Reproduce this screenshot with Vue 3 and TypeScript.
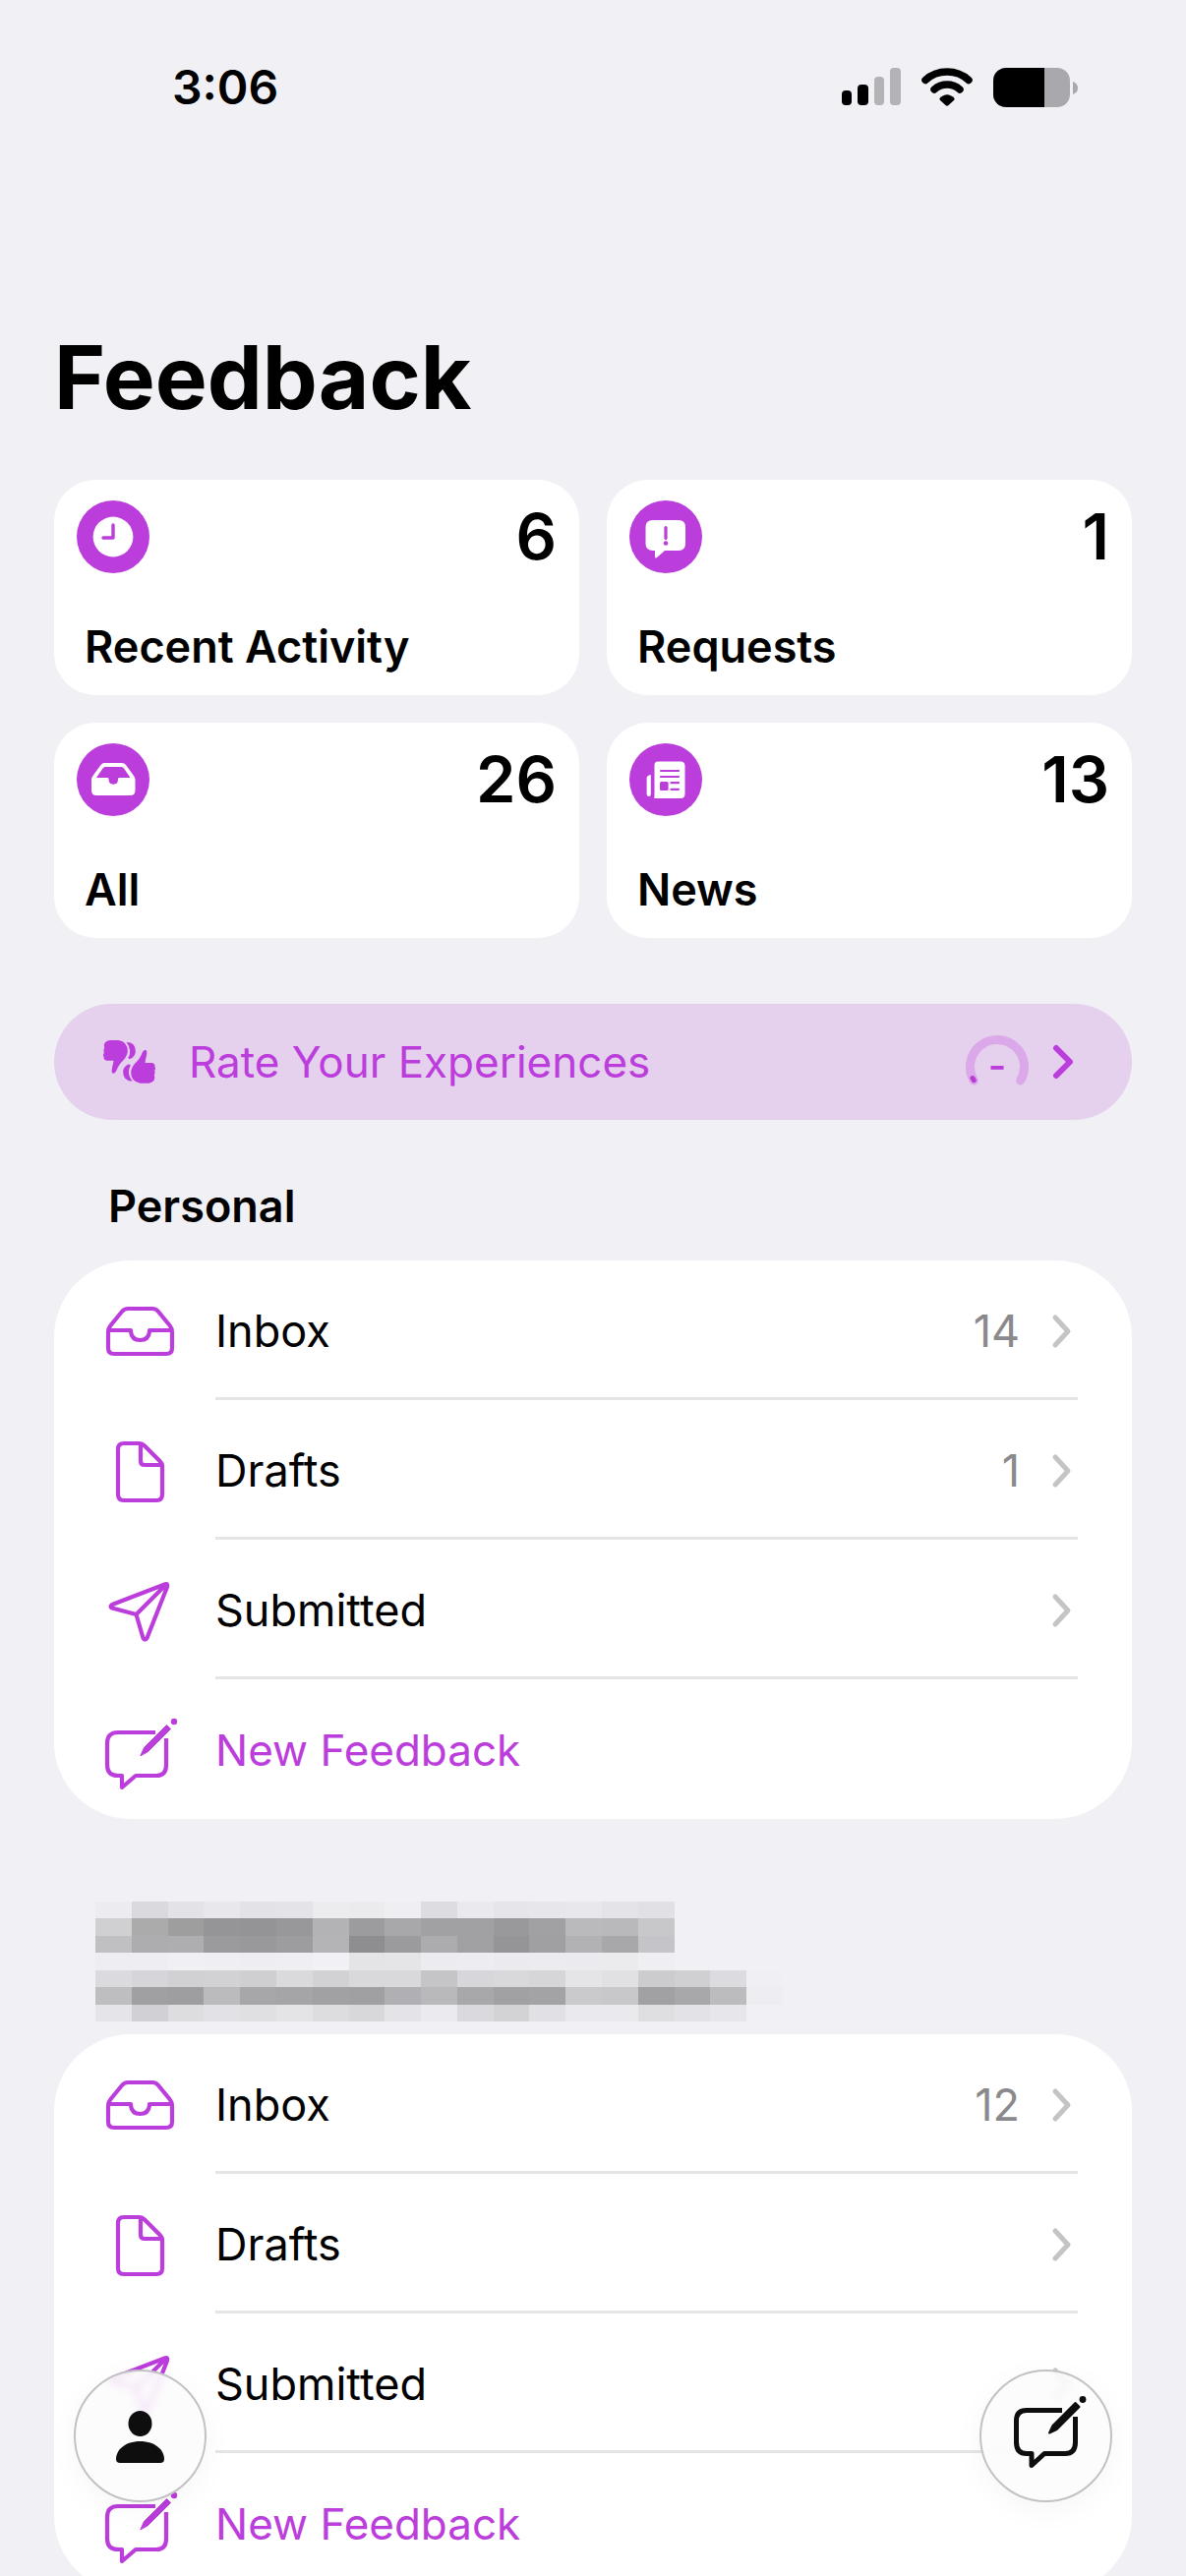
<script setup lang="ts">
type IconName = 'inbox' | 'doc' | 'send' | 'compose'

interface Tile {
  id: string
  label: string
  count: number
}

interface Row {
  label: string
  icon: IconName
  count?: number
  action?: boolean
}

interface Section {
  id: string
  title?: string
  rows: Row[]
}

const tiles: Tile[] = [
  { id: 'activity', label: 'Recent Activity', count: 6 },
  { id: 'requests', label: 'Requests', count: 1 },
  { id: 'all', label: 'All', count: 26 },
  { id: 'news', label: 'News', count: 13 },
]

const sections: Section[] = [
  {
    id: 'personal',
    title: 'Personal',
    rows: [
      { label: 'Inbox', icon: 'inbox', count: 14 },
      { label: 'Drafts', icon: 'doc', count: 1 },
      { label: 'Submitted', icon: 'send' },
      { label: 'New Feedback', icon: 'compose', action: true },
    ],
  },
  {
    id: 'team',
    rows: [
      { label: 'Inbox', icon: 'inbox', count: 12 },
      { label: 'Drafts', icon: 'doc' },
      { label: 'Submitted', icon: 'send' },
      { label: 'New Feedback', icon: 'compose', action: true },
    ],
  },
]

// Pixelated cells that hide the team name
const redacted: string[][] = [
  'ececf0 dad9de e3e3e7 e8e8ec e3e3e7 e4e4e8 ececee ebebee efeff3 dddde1 eaeaee e6e6ea e7e7eb e8e8ec e4e4e8 e1e1e5',
  'd0d0d2 ababac 9e9e9f 959597 949496 98989a b3b3b5 9c9c9e a8a8aa a1a1a3 a1a1a3 99999b a1a1a3 bababc b9b9bb c8c8ca',
  'c0c0c2 adadaf aeaeb0 9b9b9d 99999b 9d9d9f b4b4b6 8e8e90 9b9b9d acacae a1a1a3 959597 a0a0a2 b2b2b4 a8a8aa c5c4c9',
  'eeeef2 eeeef2 f0f0f4 efeff3 eeeef2 efeff3 f1f1f5 e4e4e6 e5e5e8 ecebf0 ededf1 ebebef ececf0 ebebef ebebed efeff3',
  'dbdadf d6d5da d1d1d3 d2d2d5 cfcfd1 dadadc d2d2d4 d9d9db d9d9db c5c5c7 d7d7db d9d9dc d6d6d8 e5e5e8 e1e1e4 ccccce d0d0d2 dcdbe0 f0f0f4',
  'bebec0 a0a0a2 9e9ea0 bbbbbd a7a7a9 a5a5a7 a1a1a3 a0a0a2 b0b0b4 b9b9bb a8a8aa a1a1a3 a3a3a5 cacacd c8c8ca a1a1a3 a8a8aa bcbcbe eeeef2',
  'e5e5e9 d1d1d5 dddddf e2e2e6 e0e0e3 e4e4e6 dddddf d8d8da e4e4e8 ebebef dadade d3d3d5 e1e1e5 eaeaee eaeaee dfdfe2 e3e3e7 e7e7eb f1f1f5',
].map((line) => line.split(' ').map((c) => `#${c}`))
</script>

<template>
  <div class="app">
    <header class="status">
      <span class="time">3:06</span>
      <div class="indicators">
        <svg width="60" height="40" viewBox="0 0 60 40" aria-hidden="true">
          <rect x="0" y="23" width="10" height="15" rx="4" />
          <rect x="16" y="17" width="11" height="21" rx="4" />
          <rect x="33" y="9" width="10" height="29" rx="4" fill="#b3b3b7" />
          <rect x="49" y="0" width="11" height="38" rx="4" fill="#b3b3b7" />
        </svg>
        <svg width="52" height="40" viewBox="0 0 52 40" aria-hidden="true">
          <path d="M4 12.5Q13 4 26 4T48 12.5" fill="none" stroke="#000" stroke-width="7.5" stroke-linecap="round" />
          <path d="M13 22Q18.500 17 26 17T39 22" fill="none" stroke="#000" stroke-width="7.500" stroke-linecap="round" />
          <path d="M18.500 31Q26 23.500 33.500 31Q34 32 33 33L27.500 38Q26 39.300 24.500 38L19 33Q18 32 18.500 31Z" />
        </svg>
        <svg width="86" height="40" viewBox="0 0 86 40" aria-hidden="true">
          <rect width="78" height="40" rx="13" fill="#a9a9ad" />
          <path d="M13 0H52V40H13A13 13 0 0 1 0 27V13A13 13 0 0 1 13 0Z" />
          <path d="M81 14Q86 16 86 20.500T81 27Z" fill="#a9a9ad" />
        </svg>
      </div>
    </header>

    <main class="content">
      <h1 class="title">Feedback</h1>

      <nav class="tiles" aria-label="Overview">
        <a v-for="tile in tiles" :key="tile.id" class="tile" href="#">
          <span class="tile-top">
            <svg class="tile-icon" viewBox="0 0 74 74" aria-hidden="true">
              <circle cx="37" cy="37" r="37" fill="#bb3ddb" />
              <g v-if="tile.id === 'activity'">
                <circle cx="37" cy="37" r="20.400" fill="#fff" />
                <path d="M37 25V38H27" fill="none" stroke="#bb3ddb" stroke-width="3.400" stroke-linecap="round" stroke-linejoin="round" />
              </g>
              <g v-else-if="tile.id === 'requests'">
                <path d="M24 20H50Q57 20 57 27V44Q57 51 50 51H36L28 58Q26 59.500 26 57V51H24Q16.500 51 16.500 44V27Q16.500 20 24 20Z" fill="#fff" />
                <path d="M37 27.500V38.500" stroke="#bb3ddb" stroke-width="3.200" stroke-linecap="round" />
                <circle cx="37" cy="43.500" r="2.300" fill="#bb3ddb" />
              </g>
              <g v-else-if="tile.id === 'all'">
                <path d="M28 20H46Q48.500 20 50 22L58 33Q59.500 35 59.500 37V48Q59.500 53 54.500 53H20Q15 53 15 48V37Q15 35 16.500 33L24.500 22Q26 20 28 20Z" fill="#fff" />
                <path d="M28.500 24H45.500Q47 24 48 25.500L54.500 35H43Q42 35 42 36.500Q42 41.700 37.300 41.700T32.500 36.500Q32.500 35 31.500 35H20L26.500 25.500Q27.500 24 28.500 24Z" fill="#bb3ddb" />
              </g>
              <g v-else>
                <path d="M29 18.500H52Q56.500 18.500 56.500 23V51.500Q56.500 56 52 56H25Q25.500 55 25.500 53V22Q25.500 18.500 29 18.500Z" fill="#fff" />
                <path d="M21.800 32V52Q21.800 54 19.800 54T17.600 52V35Q18 32.500 21.800 32Z" fill="#fff" />
                <path d="M32 28H50M32 34H50M42.500 40.200H50M42.500 46.800H50" stroke="#bb3ddb" stroke-width="2.200" stroke-linecap="round" />
                <rect x="31" y="39" width="8.600" height="9" rx="1.500" fill="#bb3ddb" />
              </g>
            </svg>
            <span class="tile-count">{{ tile.count }}</span>
          </span>
          <span class="tile-label">{{ tile.label }}</span>
        </a>
      </nav>

      <a class="rate" href="#">
        <svg width="57" height="50" viewBox="40 45 170 150" fill="#bb3ddb" aria-hidden="true">
          <g v-for="turn in [0, 180]" :key="turn" :transform="`rotate(${turn} 125 119.5)`">
            <path d="M50 62Q56 55 66 54H92Q120 58 120 88Q118 104 106 116Q92 128 85 148Q80 158 73 154Q70 150 73 136Q76 124 77 116H56Q46 114 47 104Q43 98 48 92Q44 84 49 78Q45 70 50 62Z" />
            <path d="M116 60Q144 60 144 88Q143 106 126 112L121 108Q128 98 127 86Q126 72 116 60Z" />
          </g>
        </svg>
        <span class="rate-label">Rate Your Experiences</span>
        <svg class="gauge" width="64" height="70" viewBox="0 -8 64 70" aria-hidden="true">
          <path d="M8.300 46A27.500 27.500 0 1 1 55.700 46" fill="none" stroke="#dba9ea" stroke-width="9" stroke-linecap="round" />
          <path d="M7 43.500L8.300 45.800" stroke="#b53dd2" stroke-width="5" stroke-linecap="round" />
          <text x="32" y="45" text-anchor="middle" font-size="40" font-weight="500" fill="#bb3ddb">-</text>
        </svg>
        <svg width="22" height="36" viewBox="0 0 22 36" aria-hidden="true">
          <path d="M4 4L18 18L4 32" fill="none" stroke="#bb3ddb" stroke-width="6" stroke-linecap="round" stroke-linejoin="round" />
        </svg>
      </a>

      <section v-for="section in sections" :key="section.id">
        <h2 v-if="section.title" class="section-title">{{ section.title }}</h2>
        <svg v-else class="redacted" viewBox="0 0 19 7" preserveAspectRatio="none" shape-rendering="crispEdges" aria-hidden="true">
          <template v-for="(line, y) in redacted" :key="y">
            <rect v-for="(fill, x) in line" :key="x" :x="x" :y="y" width="1" height="1" :fill="fill" />
          </template>
        </svg>

        <div class="list">
          <component
            :is="row.action ? 'button' : 'a'"
            v-for="row in section.rows"
            :key="row.label"
            class="row"
            :class="{ action: row.action }"
            :href="row.action ? undefined : '#'"
            :type="row.action ? 'button' : undefined"
          >
            <svg class="row-icon" viewBox="0 0 80 80" fill="none" stroke="#bb3ddb" stroke-width="4.200" stroke-linecap="round" stroke-linejoin="round" aria-hidden="true">
              <path v-if="row.icon === 'inbox'" d="M8 42V58Q8 64 14 64H67Q73 64 73 58V42Q73 38 70.500 35L59 21Q56.500 18 53 18H28Q24.500 18 22 21L10.500 35Q8 38 8 42ZM9 40H31V41.500Q32 50 40.500 50T50 41.500V40H72" />
              <path v-else-if="row.icon === 'doc'" d="M24 13H40Q42.500 13 45 15.500L60.500 31Q63 33.500 63 36V65Q63 71 57 71H24Q18 71 18 65V19Q18 13 24 13ZM41 14V31Q41 35 45 35H62" />
              <path v-else-if="row.icon === 'send'" d="M66 14.200L12 35Q9 37 12 38.500L36.500 45L43.500 69Q45.500 72.500 47.500 69L68 17Q69 13.500 66 14.200ZM36.500 45L66.500 15" />
              <g v-else>
                <path stroke-linecap="butt" d="M56 23H18Q7 23 7 34V56Q7 67 18 67H22V79L36 67H57Q67 67 67 56V29" />
                <path d="M41 46.500L44.500 38.500L67.500 15.500L71.500 19.500L48.500 42.500Z" fill="#bb3ddb" stroke-width="1" />
                <circle cx="75" cy="12" r="3.200" fill="#bb3ddb" stroke="none" />
              </g>
            </svg>
            <span class="row-body">
              <span class="row-label">{{ row.label }}</span>
              <span v-if="row.count" class="row-count">{{ row.count }}</span>
              <svg v-if="!row.action" width="22" height="36" viewBox="0 0 22 36" aria-hidden="true">
                <path d="M4 4L17 18L4 32" fill="none" stroke="#c4c4c6" stroke-width="5" stroke-linecap="round" stroke-linejoin="round" />
              </svg>
            </span>
          </component>
        </div>
      </section>
    </main>

    <div class="toolbar">
      <button class="fab" type="button" aria-label="Account">
        <svg viewBox="0 0 80 80" fill="#0e0e0f" aria-hidden="true">
          <ellipse cx="39.500" cy="27" rx="12" ry="13" />
          <path d="M39.500 45C55 45 64 54 64 63Q64 67 60 67H19Q15 67 15 63C15 54 24 45 39.500 45Z" />
        </svg>
      </button>
      <button class="fab" type="button" aria-label="New feedback">
        <svg viewBox="-2 10 80 80" fill="none" stroke="#0e0e0f" stroke-width="5" stroke-linejoin="round" aria-hidden="true">
          <path d="M54 23.500H18Q7.500 23.500 7.500 34V56Q7.500 67.500 18 67.500H23V79.500L36 67.500H57Q67.500 67.500 67.500 56V30" />
          <path d="M41 46.500L44.500 39L67.500 16L71.500 20L48.500 43Z" fill="#0e0e0f" stroke-width="2" />
          <circle cx="75" cy="12.500" r="3.400" fill="#0e0e0f" stroke="none" />
        </svg>
      </button>
    </div>
  </div>
</template>

<style>
body {
  background: #f1f0f5;
}
</style>

<style scoped>
.app {
  position: relative;
  height: 100vh;
  overflow: hidden;
  background: #f1f0f5;
  color: #000;
  font-family: Inter, 'Liberation Sans', sans-serif;
  font-size: 45px;
  line-height: 56px;
}

.app * {
  box-sizing: border-box;
}

a,
button {
  color: inherit;
  font: inherit;
  text-decoration: none;
}

button {
  border: 0;
  padding: 0;
  background: none;
  text-align: left;
}

svg {
  display: block;
  flex: none;
}

.status {
  display: flex;
  align-items: center;
  justify-content: space-between;
  height: 178px;
  padding: 0 110px 0 175px;
}

.time {
  font-size: 48px;
  font-weight: 600;
}

.indicators {
  display: flex;
  gap: 21px;
}

.content {
  padding: 0 55px;
}

.title {
  margin: 150px 0 0;
  font-size: 89px;
  font-weight: 700;
  line-height: 112px;
}

.tiles {
  display: grid;
  grid-template-columns: 1fr 1fr;
  gap: 28px;
  margin-top: 48px;
}

.tile {
  display: flex;
  flex-direction: column;
  justify-content: space-between;
  height: 219px;
  padding: 21px 23px;
  border-radius: 42px;
  background: #fff;
}

.tile-top {
  display: flex;
  align-items: center;
  justify-content: space-between;
}

.tile-icon {
  width: 74px;
  height: 74px;
}

.tile-count {
  font-size: 65px;
  font-weight: 600;
  line-height: 74px;
}

.tile-label {
  padding-left: 8px;
  font-weight: 600;
}

.rate {
  display: flex;
  align-items: center;
  height: 118px;
  margin-top: 67px;
  padding: 0 59px 0 48px;
  border-radius: 59px;
  background: #e5d0ee;
  color: #bb3ddb;
  font-size: 44px;
}

.rate-label {
  flex: 1;
  padding-left: 32px;
}

.gauge {
  margin-right: 24px;
}

.section-title {
  margin: 0;
  padding: 60px 55px 27px;
  font-size: 45px;
  font-weight: 600;
  line-height: 56px;
}

.redacted {
  width: 699px;
  height: 122px;
  margin: 84px 0 13px 42px;
}

.list {
  overflow: hidden;
  border-radius: 78px;
  background: #fff;
}

.row {
  display: flex;
  align-items: center;
  width: 100%;
  height: 142px;
  padding: 0 55px 0 47px;
}

.row-icon {
  width: 80px;
  height: 80px;
  margin-right: 37px;
  overflow: visible;
}

.row-body {
  display: flex;
  flex: 1;
  align-items: center;
  height: 100%;
  padding: 5px 5px 0 0;
  border-bottom: 3px solid #e5e5e7;
}

.row-label {
  flex: 1;
}

.row-count {
  margin-right: 32px;
  color: #8a8a8d;
}

.action {
  color: #bb3ddb;
  font-size: 44px;
}

.action .row-body {
  border-bottom-color: transparent;
}

.toolbar {
  position: absolute;
  right: 75px;
  bottom: 75px;
  left: 75px;
  display: flex;
  justify-content: space-between;
}

.fab {
  display: flex;
  align-items: center;
  justify-content: center;
  width: 135px;
  height: 135px;
  border: 2px solid #c2c2c5;
  border-radius: 50%;
  background: rgba(252, 252, 252, 0.85);
  box-shadow: 0 8px 32px rgba(0, 0, 0, 0.04);
  backdrop-filter: blur(4px);
}

.fab svg {
  width: 80px;
  height: 80px;
  overflow: visible;
}
</style>
